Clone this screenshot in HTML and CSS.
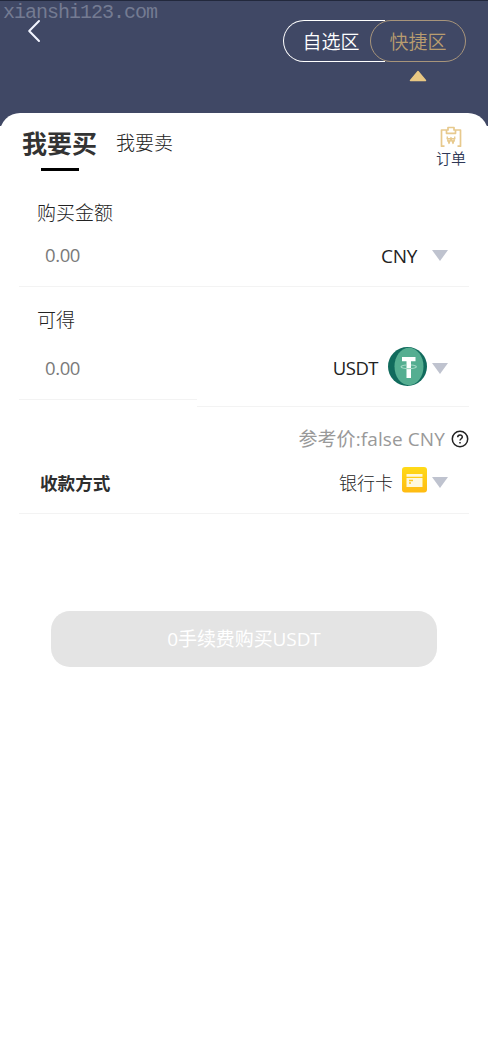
FILE: index.html
```html
<!DOCTYPE html>
<html lang="zh-CN">
<head>
<meta charset="utf-8">
<title>快捷区</title>
<link rel="stylesheet" href="styles.css">
</head>
<body>
<header class="header">
  <div class="watermark">xianshi123.com</div>
  <svg class="back" width="14" height="24" viewBox="0 0 14 24"><path d="M12 2 2.200 12 12 22"/></svg>
  <nav class="zones">
    <span class="zone zone-self">自选区</span>
    <span class="zone zone-quick">快捷区</span>
  </nav>
  <svg class="marker" width="18" height="12" viewBox="0 0 18 12"><path d="M9 1.500 16.500 10.500H1.500Z"/></svg>
</header>
<main class="card">
  <div class="tabs">
    <span class="tab tab-active">我要买</span>
    <span class="tab">我要卖</span>
    <div class="orders">
      <svg class="orders-icon" width="22" height="22" viewBox="0 0 22 22"><path d="M4.500 20.200H1.500V4H6.500M15.500 4H20.500V20.200H17.500M6.500 7.300V4H8V1.500H14V4H15.500V7.300Z"/><path class="won" d="M7 10.500 9 17.500 11 11.500 13 17.500 15 10.500M6.500 12.700H15.500M7 14.800H15"/></svg>
      <span class="orders-label">订单</span>
    </div>
  </div>
  <section class="field field-pay">
    <div class="label">购买金额</div>
    <div class="line">
      <span class="amount">0.00</span>
      <span class="unit">CNY</span>
      <svg class="caret" width="16" height="11" viewBox="0 0 16 11"><path d="M0 0H16L8 11Z"/></svg>
    </div>
  </section>
  <section class="field field-get">
    <div class="get-left">
      <div class="label">可得</div>
      <div class="amount">0.00</div>
    </div>
    <div class="get-right">
      <span class="unit">USDT</span>
      <svg class="coin" width="39" height="39" viewBox="0 0 39 39"><circle cx="19.500" cy="19.500" r="19.500" fill="#116b5d"/><ellipse cx="21" cy="19.500" rx="14.500" ry="18.700" fill="#55ae91"/><path d="M14 10H27.500V14.200H23V31H18.500V14.200H14Z" fill="#fff"/><path d="M18.500 18C11 18.300 11 21.600 20.700 21.600S30.500 18.300 23 18" fill="none" stroke="#a5d8c5" stroke-width="1.200"/></svg>
      <svg class="caret" width="16" height="11" viewBox="0 0 16 11"><path d="M0 0H16L8 11Z"/></svg>
    </div>
  </section>
  <div class="price">
    <span>参考价:false CNY</span>
    <svg class="help" width="18" height="18" viewBox="0 0 18 18"><circle cx="9" cy="9" r="7.700"/><path d="M6.700 7.300C6.700 4 11.500 4.200 11.300 7.100 11.200 8.700 9 8.800 9 10.600M9 12V13.600"/></svg>
  </div>
  <section class="method">
    <span class="method-label">收款方式</span>
    <span class="method-value">银行卡</span>
    <svg class="bank" width="25" height="26" viewBox="0 0 25 26"><defs><linearGradient id="gold" x2="0" y2="1"><stop stop-color="#ffda18"/><stop offset="1" stop-color="#ffbb12"/></linearGradient></defs><rect width="25" height="25.500" rx="3" fill="url(#gold)"/><path d="M4.500 7H20.500V9.800H4.500ZM4.500 10.900H20.500V20H4.500Z" fill="#fff8dc"/><path d="M7 13.500H11M7 16H9" stroke="#ffc71b" stroke-width="1.300"/></svg>
    <svg class="caret" width="16" height="11" viewBox="0 0 16 11"><path d="M0 0H16L8 11Z"/></svg>
  </section>
  <button class="submit" type="button">0手续费购买USDT</button>
</main>
</body>
</html>
```

FILE: styles.css
```css
* { box-sizing: border-box; }
body {
  margin: 0;
  min-height: 1056px;
  background: #fff;
  color: #222;
  font: 300 19px/28px "Open Sans", "Noto Sans CJK SC", sans-serif;
}
svg { display: block; flex: none; fill: none; }
.header {
  position: relative;
  height: 126px;
  padding: 19px 22px 0 27px;
  border-top: 1px solid #22283c;
  background: #404865;
  display: flex;
  justify-content: space-between;
}
.watermark {
  position: absolute;
  left: 3px;
  top: 0;
  color: #747b92;
  font: 20px/23px "Liberation Mono", monospace;
  letter-spacing: -1px;
}
.back { margin-top: -1px; stroke: #f2f5ff; stroke-width: 2; stroke-linecap: round; stroke-linejoin: round; }
.zones { display: flex; height: 42px; }
.zone { border: 1px solid #fff; color: #fff; line-height: 42px; text-align: center; font-weight: 350; }
.zone-self { width: 102px; border-right: 0; border-radius: 21px 0 0 21px; padding-right: 7px; }
.zone-quick { width: 96px; margin-left: -15px; border-color: #a8957b; border-radius: 21px; color: #b99d6f; }
.marker { position: absolute; left: 409px; top: 69px; fill: #e9c883; stroke: #e9c883; stroke-width: 1.5; stroke-linejoin: round; }
.card {
  position: relative;
  margin-top: -13px;
  padding: 0 19px;
  border-radius: 20px 20px 0 0;
  background: #fff;
}
.tabs { display: flex; height: 74px; padding: 0 3px 0 3px; }
.tab { padding-top: 16px; }
.tab-active {
  height: 58px;
  margin-right: 19px;
  color: #333;
  font-size: 25px;
  font-weight: 700;
  background: linear-gradient(#000, #000) center bottom / 38px 3px no-repeat;
}
.orders { margin-left: auto; display: flex; flex-direction: column; align-items: center; padding-top: 13px; }
.orders-icon { stroke: #e7c98d; stroke-width: 1.7; stroke-linejoin: round; }
.orders-icon .won { stroke-width: 1.3; }
.orders-label { font-size: 15px; line-height: 20px; color: #303856; font-weight: 350; }
.field-pay { height: 100px; padding-top: 12px; border-bottom: 1px solid #f3f3f3; }
.label { padding-left: 18px; }
.line { display: flex; align-items: center; margin-top: 14px; padding-right: 21px; }
.amount { padding-left: 26px; font-size: 18.500px; color: #7a7a7a; font-weight: 400; letter-spacing: -0.4px; }
.unit { position: relative; top: 1px; color: #222; font-weight: 400; font-size: 19px; letter-spacing: -0.3px; }
.line .unit { margin-left: auto; }
.caret { fill: #bfc3cf; }
.line .caret { margin-left: 15px; }
.field-get { display: flex; height: 120px; }
.get-left { width: 178px; height: 113px; padding-top: 19px; border-bottom: 1px solid #f3f3f3; }
.get-left .amount { margin-top: 20px; }
.get-right { flex: 1; display: flex; align-items: center; justify-content: flex-end; padding: 41px 21px 0 0; border-bottom: 1px solid #f3f3f3; }
.get-right .unit { font-size: 18.500px; letter-spacing: -0.5px; }
.coin { margin: -2px 5px 0 10px; }
.get-right .caret { margin-top: 3px; }
.price { display: flex; align-items: center; justify-content: flex-end; height: 60px; padding-top: 4px; color: #999; font-weight: 400; letter-spacing: 0.1px; }
.help { margin-left: 6px; stroke: #222; stroke-width: 1.5; }
.method { display: flex; align-items: center; height: 47px; padding: 0 21px 16px; border-bottom: 1px solid #f3f3f3; }
.method-label { position: relative; top: 1px; font-weight: 700; font-size: 17.600px; color: #2e2e2e; }
.method-value { position: relative; top: 1px; margin-left: auto; font-size: 18px; }
.bank { margin: -5px 5px 0 9px; }
.submit {
  display: block;
  width: 386px;
  height: 56px;
  margin: 97px auto 0;
  padding: 0;
  border: 0;
  border-radius: 19px;
  background: #e4e4e4;
  color: #fff;
  font: 400 19px/57px "Open Sans", "Noto Sans CJK SC", sans-serif;
  letter-spacing: -0.1px;
}
```
